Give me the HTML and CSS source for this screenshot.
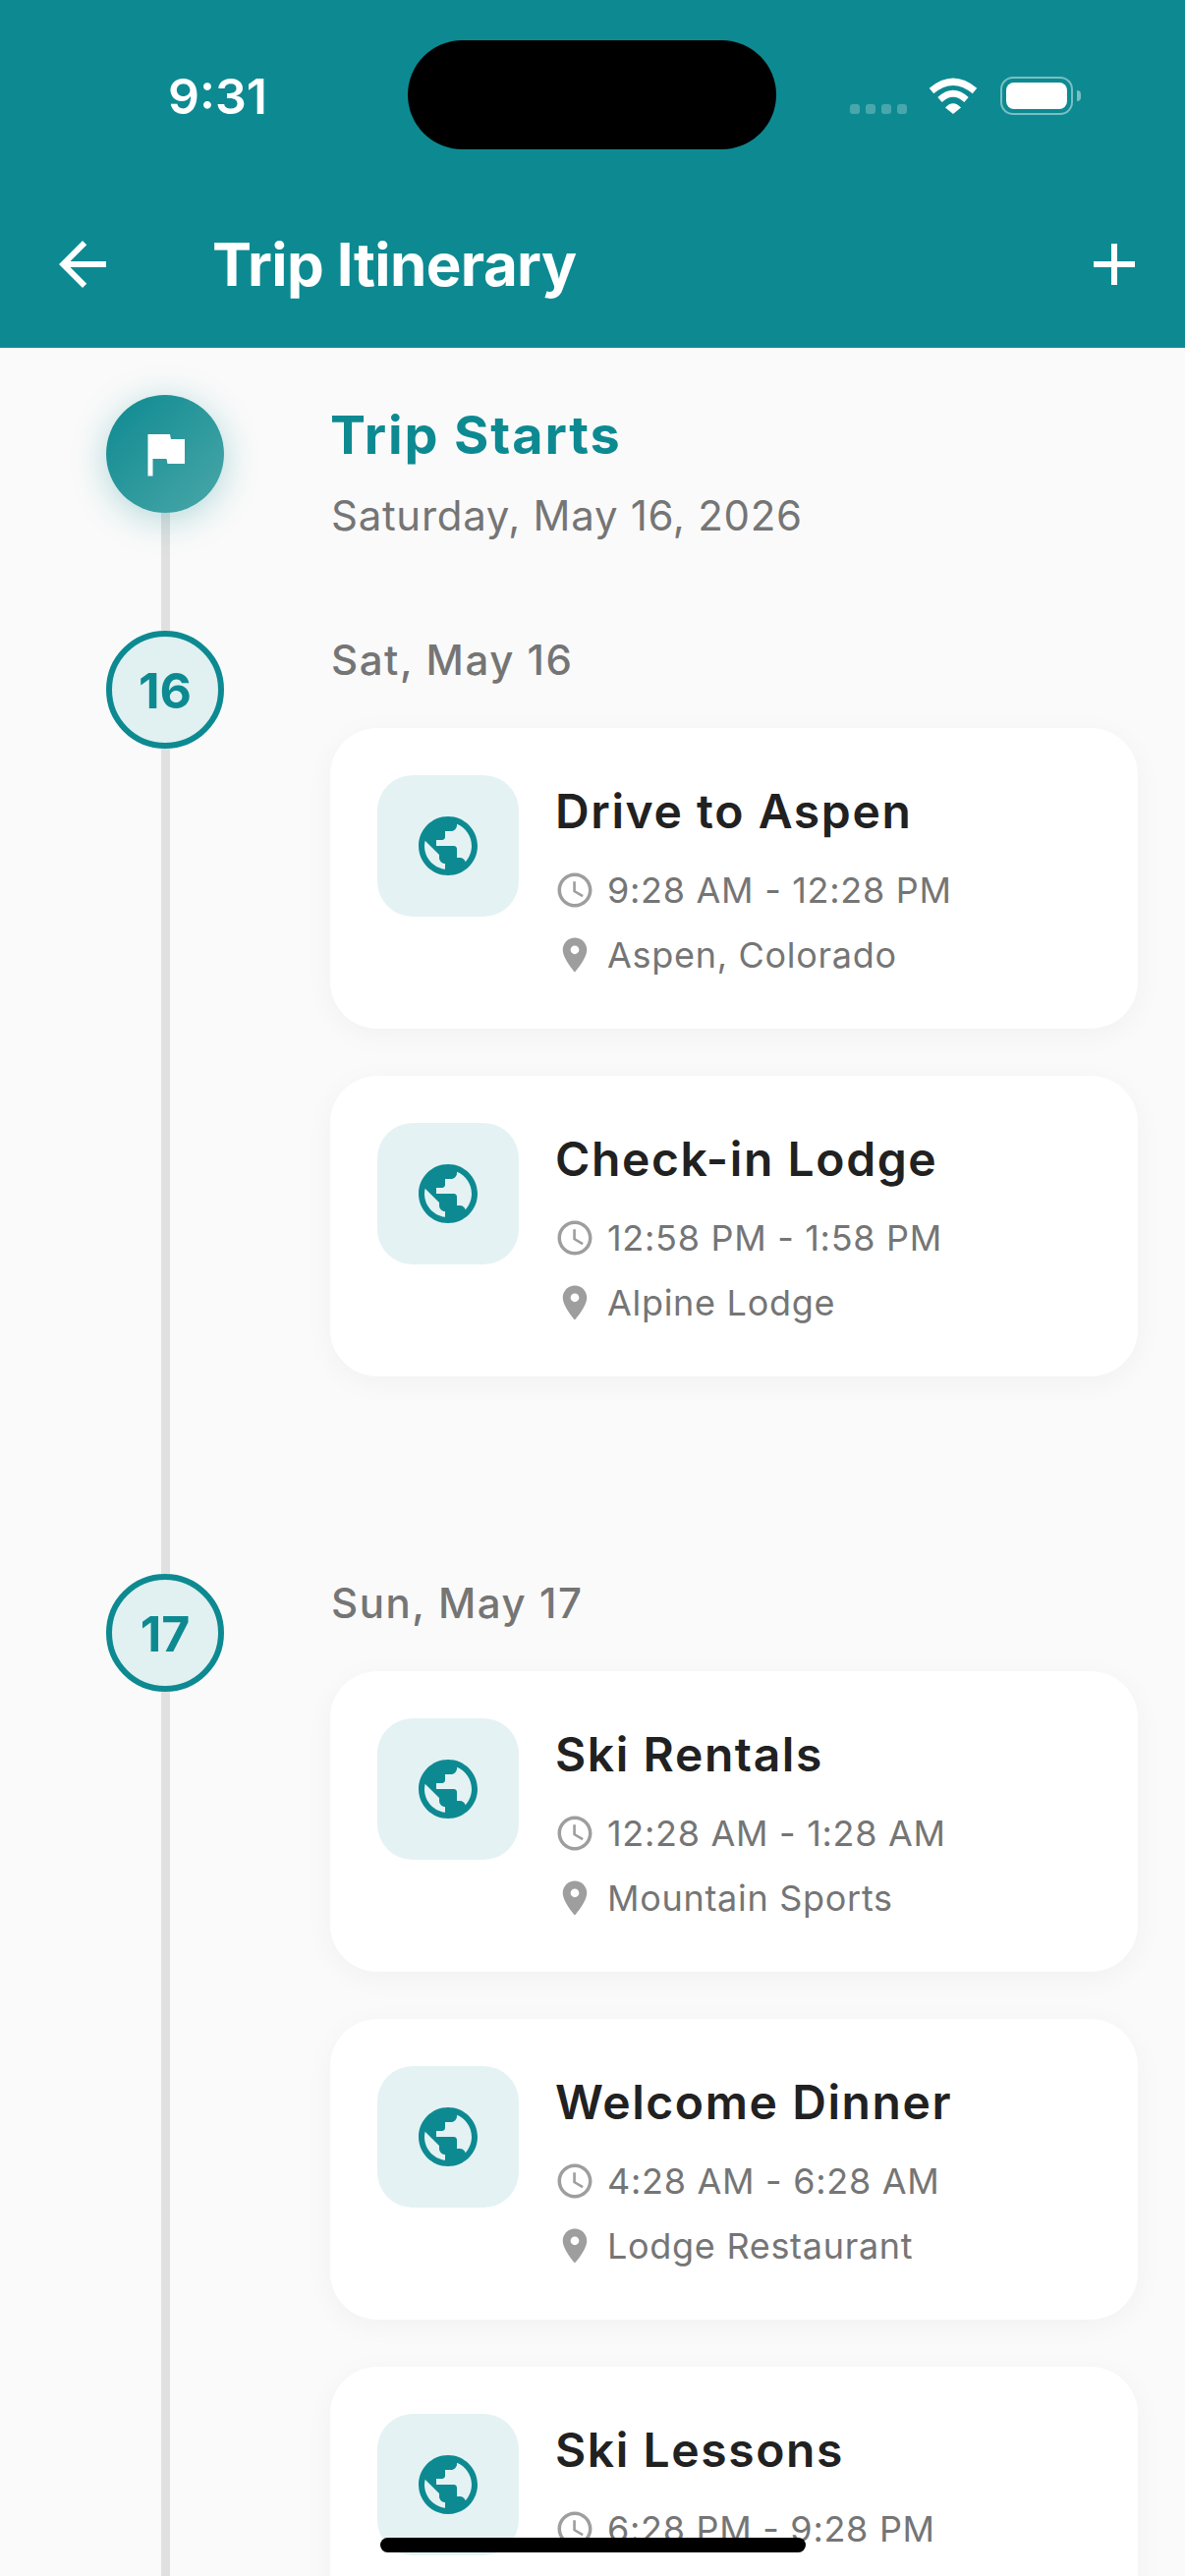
FILE: index.html
```html
<!DOCTYPE html>
<html lang="en">
<head>
    <meta charset="UTF-8">
    <meta name="viewport" content="width=device-width, initial-scale=1.0">
    <title>Trip Itinerary</title>
    <link rel="stylesheet" href="styles.css">
</head>
<body>
    <svg class="icon-defs" width="0" height="0">
        <symbol id="i-globe" viewBox="0 0 24 24"><path d="M12 2C6.48 2 2 6.48 2 12s4.48 10 10 10 10-4.48 10-10S17.52 2 12 2zm-1 17.93c-3.95-.49-7-3.85-7-7.93 0-.62.08-1.21.21-1.79L9 15v1c0 1.1.9 2 2 2v1.93zm6.9-2.54c-.26-.81-1-1.39-1.9-1.39h-1v-3c0-.55-.45-1-1-1H8v-2h2c.55 0 1-.45 1-1V7h2c1.1 0 2-.9 2-2v-.41c2.93 1.19 5 4.06 5 7.41 0 2.08-.8 3.97-2.1 5.39z"/></symbol>
        <symbol id="i-clock" viewBox="0 0 24 24"><path d="M11.99 2C6.47 2 2 6.48 2 12s4.47 10 9.99 10C17.52 22 22 17.52 22 12S17.52 2 11.99 2zM12 20c-4.42 0-8-3.58-8-8s3.58-8 8-8 8 3.58 8 8-3.58 8-8 8zm.5-13H11v6l5.25 3.15.75-1.23-4.5-2.67z"/></symbol>
        <symbol id="i-pin" viewBox="0 0 24 24"><path d="M12 2C8.13 2 5 5.13 5 9c0 5.25 7 13 7 13s7-7.75 7-13c0-3.87-3.13-7-7-7zm0 9.5c-1.38 0-2.5-1.12-2.5-2.5s1.12-2.5 2.5-2.5 2.5 1.12 2.5 2.5-1.12 2.5-2.5 2.5z"/></symbol>
    </svg>

    <div class="screen">
        <div class="header">
            <div class="status-bar">
                <span class="clock-time">9:31</span>
                <div class="island"></div>
                <div class="status-icons">
                    <div class="signal"><i></i><i></i><i></i><i></i></div>
                    <svg class="wifi" viewBox="0 0 50 37" width="50" height="37">
                        <path d="M3 13.5Q25 -5 47 13.5" fill="none" stroke="#fff" stroke-width="7"/>
                        <path d="M11.5 22.5Q25 10 38.5 22.5" fill="none" stroke="#fff" stroke-width="6.5"/>
                        <path d="M17 30.5Q25 22 33 30.5L25 37Z" fill="#fff"/>
                    </svg>
                    <div class="battery"><div class="battery-fill"></div></div>
                    <div class="battery-cap"></div>
                </div>
            </div>
            <div class="app-bar">
                <svg class="bar-icon" viewBox="0 0 24 24"><path d="M20 11H7.83l5.59-5.59L12 4l-8 8 8 8 1.41-1.41L7.83 13H20v-2z"/></svg>
                <h1 class="bar-title">Trip Itinerary</h1>
                <svg class="bar-icon" viewBox="0 0 24 24"><path d="M19 13h-6v6h-2v-6H5v-2h6V5h2v6h6v2z"/></svg>
            </div>
        </div>

        <div class="timeline">
            <div class="row row-start">
                <div class="rail">
                    <div class="node node-start">
                        <svg class="flag" viewBox="0 0 24 24"><path d="M14.4 6L14 4H5v17h2v-7h5.6l.4 2h7V6z"/></svg>
                    </div>
                    <div class="line"></div>
                </div>
                <div class="content">
                    <div class="start-title">Trip Starts</div>
                    <div class="start-date">Saturday, May 16, 2026</div>
                </div>
            </div>

            <div class="row row-day">
                <div class="rail">
                    <div class="node node-day">16</div>
                    <div class="line"></div>
                </div>
                <div class="content">
                    <div class="day-label">Sat, May 16</div>
                    <div class="card">
                        <div class="card-icon"><svg><use href="#i-globe"/></svg></div>
                        <div class="card-body">
                            <div class="card-title">Drive to Aspen</div>
                            <div class="meta"><svg><use href="#i-clock"/></svg><span>9:28 AM - 12:28 PM</span></div>
                            <div class="meta"><svg><use href="#i-pin"/></svg><span>Aspen, Colorado</span></div>
                        </div>
                    </div>
                    <div class="card">
                        <div class="card-icon"><svg><use href="#i-globe"/></svg></div>
                        <div class="card-body">
                            <div class="card-title">Check-in Lodge</div>
                            <div class="meta"><svg><use href="#i-clock"/></svg><span>12:58 PM - 1:58 PM</span></div>
                            <div class="meta"><svg><use href="#i-pin"/></svg><span>Alpine Lodge</span></div>
                        </div>
                    </div>
                </div>
            </div>

            <div class="row row-day">
                <div class="rail">
                    <div class="node node-day">17</div>
                    <div class="line"></div>
                </div>
                <div class="content">
                    <div class="day-label">Sun, May 17</div>
                    <div class="card">
                        <div class="card-icon"><svg><use href="#i-globe"/></svg></div>
                        <div class="card-body">
                            <div class="card-title">Ski Rentals</div>
                            <div class="meta"><svg><use href="#i-clock"/></svg><span>12:28 AM - 1:28 AM</span></div>
                            <div class="meta"><svg><use href="#i-pin"/></svg><span>Mountain Sports</span></div>
                        </div>
                    </div>
                    <div class="card">
                        <div class="card-icon"><svg><use href="#i-globe"/></svg></div>
                        <div class="card-body">
                            <div class="card-title">Welcome Dinner</div>
                            <div class="meta"><svg><use href="#i-clock"/></svg><span>4:28 AM - 6:28 AM</span></div>
                            <div class="meta"><svg><use href="#i-pin"/></svg><span>Lodge Restaurant</span></div>
                        </div>
                    </div>
                    <div class="card">
                        <div class="card-icon"><svg><use href="#i-globe"/></svg></div>
                        <div class="card-body">
                            <div class="card-title">Ski Lessons</div>
                            <div class="meta"><svg><use href="#i-clock"/></svg><span>6:28 PM - 9:28 PM</span></div>
                        </div>
                    </div>
                </div>
            </div>
        </div>

        <div class="home-indicator"></div>
    </div>
</body>
</html>
```

FILE: styles.css
```css
* {
    box-sizing: border-box;
}
html, body {
    margin: 0;
    height: 100%;
    overflow: hidden;
}
body {
    font-family: Inter, "Liberation Sans", sans-serif;
    background-color: #fafafa;
}
.icon-defs {
    position: absolute;
}
.screen {
    position: relative;
    height: 2622px;
    overflow: hidden;
}

/* header */
.header {
    height: 354px;
    background-color: #0d8a91;
    color: #fff;
}
.status-bar {
    position: relative;
    height: 189px;
    display: flex;
    justify-content: space-between;
    padding: 70px 0 0 171px;
}
.clock-time {
    font-size: 50px;
    line-height: 56px;
    font-weight: 600;
}
.island {
    position: absolute;
    left: 415px;
    top: 41px;
    width: 375px;
    height: 111px;
    border-radius: 56px;
    background-color: #000;
}
.status-icons {
    display: flex;
    align-items: flex-start;
    padding: 9px 106px 0 0;
}
.signal {
    display: flex;
    gap: 6px;
    margin: 27px 22px 0 0;
}
.signal i {
    width: 10px;
    height: 10px;
    border-radius: 3px;
    background-color: rgba(255,255,255,0.25);
}
.wifi {
    margin-right: 23px;
}
.battery {
    width: 74px;
    height: 39px;
    margin-top: -1px;
    padding: 4px;
    border: 2px solid rgba(255,255,255,0.45);
    border-radius: 13px;
}
.battery-fill {
    height: 100%;
    background-color: #fff;
    border-radius: 8px;
}
.battery-cap {
    width: 4px;
    height: 11px;
    margin: 13px 0 0 4px;
    background-color: rgba(255,255,255,0.45);
    border-radius: 0 4px 4px 0;
}
.app-bar {
    display: flex;
    align-items: center;
    height: 165px;
    padding: 0 36px 5px 48px;
}
.bar-icon {
    flex: none;
    width: 72px;
    height: 72px;
    fill: #fff;
}
.bar-title {
    flex: 1;
    margin: 0 0 0 96px;
    font-size: 60px;
    font-weight: 700;
    letter-spacing: -0.6px;
}

/* timeline */
.timeline {
    padding: 48px 48px 0 108px;
}
.row {
    display: flex;
    gap: 108px;
}
.row-start {
    height: 240px;
}
.rail {
    flex: none;
    width: 120px;
    display: flex;
    flex-direction: column;
    align-items: center;
}
.line {
    flex: 1;
    width: 9px;
    background-color: #e0e0e0;
}
.node {
    flex: none;
    width: 120px;
    height: 120px;
    border-radius: 50%;
    display: flex;
    align-items: center;
    justify-content: center;
    position: relative;
}
.node-start {
    background: linear-gradient(135deg, #0d8a91, #4aa7a8);
    box-shadow: 0 6px 36px rgba(13,138,145,0.3);
}
.flag {
    width: 60px;
    height: 60px;
    fill: #fff;
}
.node-day {
    border: 6px solid #0d8a91;
    background-color: #e1f0f0;
    color: #0d8a91;
    padding-top: 2px;
    font-size: 50px;
    font-weight: 700;
}
.content {
    flex: 1;
    min-width: 0;
}
.start-title {
    margin-top: 6px;
    font-size: 54px;
    line-height: 70px;
    font-weight: 700;
    letter-spacing: 1.85px;
    color: #0d8a91;
}
.start-date {
    margin-top: 22px;
    margin-left: 1px;
    font-size: 42px;
    line-height: 50px;
    letter-spacing: 0.7px;
    color: #757575;
}
.day-label {
    height: 99px;
    padding: 5px 0 0 1px;
    font-size: 42px;
    line-height: 50px;
    font-weight: 500;
    letter-spacing: 1.55px;
    color: #757575;
}
.card {
    display: flex;
    gap: 37px;
    height: 306px;
    margin-bottom: 48px;
    padding: 48px;
    background-color: #fff;
    border-radius: 48px;
    box-shadow: 0 6px 30px rgba(0,0,0,0.04);
}
.row-day .card:last-child {
    margin-bottom: 201px;
}
.card-icon {
    flex: none;
    width: 144px;
    height: 144px;
    border-radius: 36px;
    background-color: #e4f2f3;
    display: flex;
    align-items: center;
    justify-content: center;
}
.card-icon svg {
    width: 72px;
    height: 72px;
    fill: #0d8a91;
}
.card-title {
    margin: 8px 0 18px;
    font-size: 48px;
    line-height: 58px;
    font-weight: 600;
    letter-spacing: 1.6px;
    color: #212121;
}
.meta {
    display: flex;
    align-items: center;
    gap: 12px;
    height: 66px;
    margin-left: -1px;
    font-size: 36px;
    letter-spacing: 0.7px;
    color: #757575;
}
.meta svg {
    flex: none;
    width: 42px;
    height: 42px;
    fill: #9e9e9e;
}
.home-indicator {
    position: absolute;
    left: 387px;
    top: 2583px;
    width: 433px;
    height: 15px;
    border-radius: 8px;
    background-color: #000;
}
```
